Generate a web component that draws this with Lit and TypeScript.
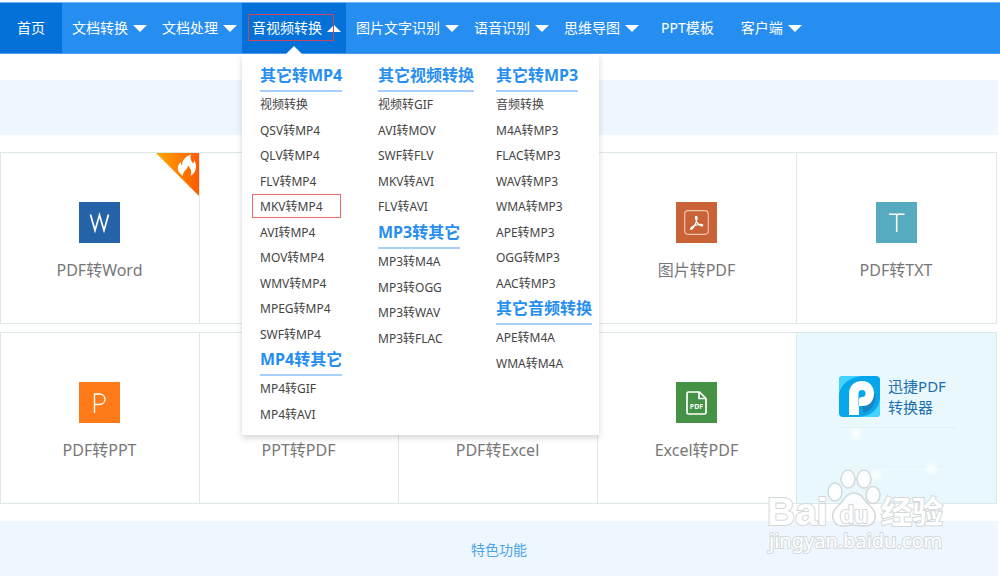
import { LitElement, html, css, svg, nothing } from "lit";
import { customElement } from "lit/decorators.js";
import { classMap } from "lit/directives/class-map.js";

interface NavItem { label: string; menu?: boolean; active?: boolean; home?: boolean }
interface Group { title: string; items: string[] }
interface Tool { label?: string; icon?: string; hot?: boolean }

const NAV: NavItem[] = [
  { label: "首页", home: true },
  { label: "文档转换", menu: true },
  { label: "文档处理", menu: true },
  { label: "音视频转换", menu: true, active: true },
  { label: "图片文字识别", menu: true },
  { label: "语音识别", menu: true },
  { label: "思维导图", menu: true },
  { label: "PPT模板" },
  { label: "客户端", menu: true },
];

const COLUMNS: Group[][] = [
  [
    { title: "其它转MP4", items: ["视频转换", "QSV转MP4", "QLV转MP4", "FLV转MP4", "MKV转MP4", "AVI转MP4", "MOV转MP4", "WMV转MP4", "MPEG转MP4", "SWF转MP4"] },
    { title: "MP4转其它", items: ["MP4转GIF", "MP4转AVI"] },
  ],
  [
    { title: "其它视频转换", items: ["视频转GIF", "AVI转MOV", "SWF转FLV", "MKV转AVI", "FLV转AVI"] },
    { title: "MP3转其它", items: ["MP3转M4A", "MP3转OGG", "MP3转WAV", "MP3转FLAC"] },
  ],
  [
    { title: "其它转MP3", items: ["音频转换", "M4A转MP3", "FLAC转MP3", "WAV转MP3", "WMA转MP3", "APE转MP3", "OGG转MP3", "AAC转MP3"] },
    { title: "其它音频转换", items: ["APE转M4A", "WMA转M4A"] },
  ],
];

const MARKED = "MKV转MP4";

const ROW_ONE: Tool[] = [
  { label: "PDF转Word", icon: "word", hot: true },
  {},
  {},
  { label: "图片转PDF", icon: "image" },
  { label: "PDF转TXT", icon: "txt" },
];

const ROW_TWO: Tool[] = [
  { label: "PDF转PPT", icon: "ppt" },
  { label: "PPT转PDF" },
  { label: "PDF转Excel" },
  { label: "Excel转PDF", icon: "excel" },
];

const ICONS: Record<string, unknown> = {
  word: svg`<rect width="41" height="41" fill="#2563a9"/>
    <path d="M11.500 12.500 16 28.500 20.500 13 25 28.500 29.500 12.500" fill="none" stroke="#fff" stroke-width="1.700"/>`,
  ppt: svg`<rect width="41" height="41" fill="#ff7b1a"/>
    <path d="M15.500 31V12h4.500c8 0 8 10.500 0 10.500h-4.500" fill="none" stroke="#fff" stroke-width="1.400"/>`,
  txt: svg`<rect width="41" height="41" fill="#57abc1"/>
    <path d="M13 12.300h15.500M20.700 12.300V30" fill="none" stroke="#fff" stroke-width="1.600"/>`,
  image: svg`<rect width="41" height="41" fill="#c96337"/>
    <rect x="8.700" y="8.700" width="23.600" height="23.600" rx="3.500" fill="none" stroke="#f0c3ae" stroke-width="1.200"/>
    <path d="M20 14.500c2 0 .8 4.500-.6 7.300-1.400 2.900-3.500 6-4.500 5.500-1-.8 1.500-3 5-4.100 3-1 6.700-1.300 6.800 0 0 1.400-3.500.3-5.200-2-1.400-1.900-2.600-6.700-1.500-6.700z" fill="none" stroke="#fff" stroke-width="1.300"/>`,
  excel: svg`<rect width="41" height="41" fill="#459145"/>
    <path d="M23.500 10H12.500a1.500 1.500 0 0 0-1.500 1.500v19a1.500 1.500 0 0 0 1.500 1.500h16a1.500 1.500 0 0 0 1.500-1.500v-14zM23 10v6.500h7" fill="none" stroke="#fff" stroke-width="1.700" stroke-linejoin="round"/>
    <text x="20.500" y="26.500" text-anchor="middle" font-size="7" font-weight="700" fill="#fff">PDF</text>`,
};

@customElement("app-root")
export class AppRoot extends LitElement {
  static styles = css`
    :host {
      display: block;
      position: relative;
      min-height: 100vh;
      overflow: hidden;
      background: #fff;
      font-family: "Noto Sans", "Noto Sans CJK SC", sans-serif;
      font-size: 14px;
      color: #444;
    }
    * { box-sizing: border-box; }
    a { color: inherit; text-decoration: none; }
    ul, h3 { margin: 0; padding: 0; list-style: none; }
    svg { display: block; }

    .bar {
      display: flex;
      margin-top: 2px;
      height: 52px;
      background: #278ef1;
      border-top: 1px solid #70b4f6;
      border-bottom: 1px solid #4b9ff2;
    }
    .entry { position: relative; display: flex; }
    .entry.dark { background: #0471d9; }
    .top {
      display: flex;
      align-items: center;
      gap: 5px;
      padding: 0 5px 0 10px;
      color: #fff;
      line-height: 20px;
      white-space: nowrap;
    }
    .top.plain { padding: 0 17px; }
    .arrow {
      border: solid transparent;
      border-width: 7px 7px 0;
      border-top-color: #fff;
    }
    .arrow.up { border-width: 0 7px 7px; border-bottom-color: #fff; }
    .frame {
      position: absolute;
      inset: 11px 12px 12px 6px;
      border: 1px solid #c8455f;
      pointer-events: none;
    }
    .notch {
      position: absolute;
      bottom: -1px;
      left: 50%;
      margin-left: -8px;
      border: solid transparent;
      border-width: 0 8px 8px;
      border-bottom-color: #fff;
    }
    .panel {
      position: absolute;
      z-index: 2;
      top: 51px;
      left: 0;
      display: grid;
      grid-template-columns: repeat(3, 96px);
      column-gap: 22px;
      padding: 9px 7px 8px 18px;
      background: #fff;
      box-shadow: 0 3px 6px rgba(0, 0, 0, 0.16);
      white-space: nowrap;
    }
    .title {
      width: fit-content;
      padding-bottom: 3px;
      border-bottom: 2px solid #a9cffc;
      font-size: 16px;
      line-height: 24px;
      font-weight: 700;
      color: #278ef1;
    }
    .links li { position: relative; font-size: 12px; line-height: 25px; }
    .links li:nth-child(odd) { line-height: 26px; }
    .mark {
      position: absolute;
      inset: 0 auto auto -8px;
      width: 89px;
      height: 24px;
      border: 1px solid #f26a6a;
      pointer-events: none;
    }

    .content {
      display: flex;
      flex-direction: column;
      padding: 26px 2px 0 0;
    }
    .band {
      display: flex;
      align-items: center;
      justify-content: center;
      height: 55px;
      background: #eef7ff;
      color: #4ca3e8;
    }
    .tools {
      display: grid;
      grid-template-columns: repeat(5, 1fr);
      margin: 17px 1px 0 0;
      height: 172px;
      border: 1px solid #dde8eb;
    }
    .tools + .tools { margin-top: 8px; }
    .tools + .band { margin-top: 17px; }
    .card {
      position: relative;
      display: flex;
      flex-direction: column;
      align-items: center;
      gap: 15px;
      padding: 49px 1px 0 0;
      border-right: 1px solid #dde8eb;
      font-size: 16px;
      line-height: 24px;
      color: #777;
    }
    .card:last-child { border-right: 0; }
    .icon { width: 41px; height: 41px; }
    .hot { position: absolute; top: 0; right: 0; }
    .promo {
      position: relative;
      display: flex;
      justify-content: center;
      align-items: flex-start;
      gap: 8px;
      padding: 43px 8px 0 0;
      background: #e8f8fd;
      font-size: 15px;
      line-height: 21px;
      color: #1d6fb2;
    }
    .name { display: block; }
    .glow { position: absolute; inset: 90px 0 0; }
    .brand { position: absolute; right: 50px; top: 466px; z-index: 3; pointer-events: none; }
  `;

  private navEntry(item: NavItem) {
    return html`
      <div class=${classMap({ entry: true, dark: !!(item.active || item.home) })}>
        <a href="#" class=${classMap({ top: true, plain: !item.menu })}>
          <span>${item.label}</span>
          ${item.menu ? html`<span class=${classMap({ arrow: true, up: !!item.active })}></span>` : nothing}
        </a>
        ${item.active ? html`<span class="frame"></span><span class="notch"></span>${this.panel()}` : nothing}
      </div>`;
  }

  private panel() {
    return html`<div class="panel">
      ${COLUMNS.map((groups) => html`<div>
        ${groups.map((g) => html`
          <h3 class="title">${g.title}</h3>
          <ul class="links">
            ${g.items.map((t) => html`<li><a href="#">${t}</a>${t === MARKED ? html`<span class="mark"></span>` : nothing}</li>`)}
          </ul>`)}
      </div>`)}
    </div>`;
  }

  private card(tool: Tool) {
    if (!tool.label) return html`<div class="card"></div>`;
    return html`<a href="#" class="card">
      <svg class="icon" viewBox="0 0 41 41" aria-hidden="true">${tool.icon ? ICONS[tool.icon] : nothing}</svg>
      <span>${tool.label}</span>
      ${tool.hot ? html`<svg class="hot" width="43" height="43" viewBox="0 0 43 43" aria-hidden="true">
        <defs><linearGradient id="flame"><stop offset="0" stop-color="#ffa800"/><stop offset="1" stop-color="#ff5a00"/></linearGradient></defs>
        <path d="M0 0h43v43z" fill="url(#flame)"/>
        <path d="M27 23c-7-5-6-10-2.500-14 .3 2 .8 2.700 1.500 3.200C26 7 30 3 35 1.500c-1.500 4 .5 6.500 2 9 .8-.8 1.200-2 1-3.500 3 4 3.500 12-3.500 16 1.500-4 .5-7-2.500-10.500-.2 2.500-1.500 3.500-3 5-1.500 1.600-2.300 3.200-2 5.500z" fill="#fff"/>
      </svg>` : nothing}
    </a>`;
  }

  private promo() {
    return html`<a href="#" class="promo">
      <svg class="icon" viewBox="0 0 41 41" aria-hidden="true">
        <rect width="41" height="41" rx="4" fill="#06a6ea"/>
        <path d="M0 18V4a4 4 0 0 1 4-4h18C10 2 2 8 0 18zM41 22v15a4 4 0 0 1-4 4H20c12-1 20-8 21-19z" fill="#43d3ff"/>
        <path d="M23 30l8-4 5-9c2 10-4 19-12 20z" fill="#1784c4"/>
        <path d="M10 39V18C10 9 16 5 23 5c8 0 12 6 12 12.500S31 30 24 30h-4v9z" fill="#fff"/>
        <path d="M19.500 30V17.500a3.500 3.500 0 1 1 3.500 3.500c-2 0-3 1-3 3v6z" fill="#06a6ea"/>
      </svg>
      <span><span class="name">迅捷PDF</span><span class="name">转换器</span></span>
      <svg class="glow" width="200" height="80" viewBox="0 0 200 80" aria-hidden="true">
        <defs><radialGradient id="spark"><stop offset="0" stop-color="#fff"/><stop offset=".3" stop-color="#fff" stop-opacity=".7"/><stop offset="1" stop-color="#fff" stop-opacity="0"/></radialGradient></defs>
        <path d="M42 4.500h113q4 0 4 3" fill="none" stroke="#dff1f6"/>
        <path d="M85 43.500h60" stroke="#e3f4f9"/>
        <circle cx="59" cy="11" r="8" fill="url(#spark)"/>
        <circle cx="79" cy="52" r="8" fill="url(#spark)"/>
        <circle cx="134" cy="46" r="8" fill="url(#spark)"/>
      </svg>
    </a>`;
  }

  private brand() {
    return html`<svg class="brand" width="184" height="92" viewBox="0 0 184 92" role="img" aria-label="Baidu 经验">
      <g fill="#fff" fill-opacity=".85" stroke="#d3d8da" stroke-width="1.500">
        <ellipse cx="69" cy="26" rx="7" ry="9"/>
        <ellipse cx="82" cy="13" rx="7" ry="9"/>
        <ellipse cx="98" cy="13" rx="7" ry="9"/>
        <ellipse cx="107" cy="29" rx="7" ry="8.500"/>
        <path d="M88 27c-8 0-10 8-16 13-9 7-6 20 5 20 5 0 7-1 11-1s7 1 11 1c11 0 14-12 5-20-6-5-8-13-16-13z"/>
      </g>
      <g fill="#fff" stroke="#d3d8da" stroke-width="2" paint-order="stroke" font-weight="700">
        <text x="1" y="59" font-size="39" font-family="Liberation Sans, sans-serif">Bai</text>
        <text x="74" y="57" font-size="23" font-family="Liberation Sans, sans-serif">du</text>
        <text x="115" y="57" font-size="31" font-family="Noto Sans CJK SC, sans-serif">经验</text>
        <text x="3" y="82" font-size="20" font-weight="400">jingyan.baidu.com</text>
      </g>
    </svg>`;
  }

  render() {
    return html`
      <nav class="bar">${NAV.map((n) => this.navEntry(n))}</nav>
      <main class="content">
        <div class="band"></div>
        <section class="tools">${ROW_ONE.map((t) => this.card(t))}</section>
        <section class="tools">${ROW_TWO.map((t) => this.card(t))}${this.promo()}</section>
        <div class="band">特色功能</div>
      </main>
      ${this.brand()}`;
  }
}
